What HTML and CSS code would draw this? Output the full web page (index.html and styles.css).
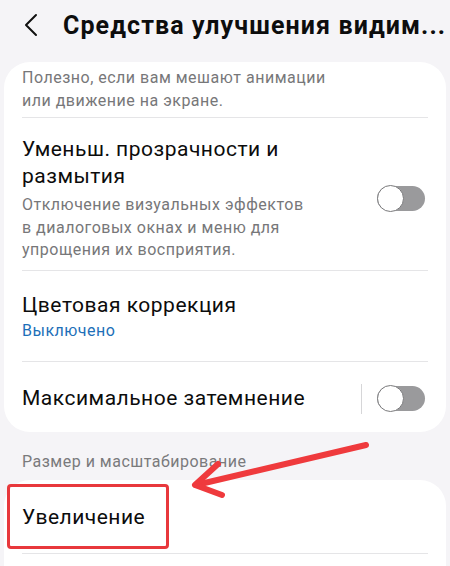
FILE: index.html
```html
<!DOCTYPE html>
<html lang="ru">
<head>
<meta charset="utf-8">
<link rel="stylesheet" href="styles.css">
</head>
<body>
<div class="screen">
  <header class="header">
    <svg class="back" width="16" height="24" viewBox="0 0 16 24"><path d="M13 2 L3 12 L13 22" fill="none" stroke="#111" stroke-width="2" stroke-linecap="round" stroke-linejoin="round"/></svg>
    <h1 class="title">Средства улучшения видим...</h1>
  </header>

  <section class="card card-top">
    <div class="item item-partial">
      <div class="sub">Полезно, если вам мешают анимации<br>или движение на экране.</div>
    </div>
    <div class="item item-switch">
      <div class="text">
        <div class="label">Уменьш. прозрачности и<br>размытия</div>
        <div class="sub">Отключение визуальных эффектов<br>в диалоговых окнах и меню для<br>упрощения их восприятия.</div>
      </div>
      <span class="toggle"><span class="knob"></span></span>
    </div>
    <div class="item item-color">
      <div class="text">
        <div class="label">Цветовая коррекция</div>
        <div class="status">Выключено</div>
      </div>
    </div>
    <div class="item item-last">
      <div class="text">
        <div class="label">Максимальное затемнение</div>
      </div>
      <span class="vsep"></span>
      <span class="toggle"><span class="knob"></span></span>
    </div>
  </section>

  <div class="section-title">Размер и масштабирование</div>

  <section class="card card-bottom">
    <div class="item item-zoom">
      <div class="label">Увеличение</div>
    </div>
  </section>

  <div class="highlight"></div>
  <svg class="arrow" width="450" height="566" viewBox="0 0 450 566">
    <g fill="none" stroke="#ef3a3d" stroke-width="6" stroke-linecap="round" stroke-linejoin="round">
      <path d="M366 445 L196 485"/>
      <path d="M218 464 L195 485 L222 495"/>
    </g>
  </svg>
</div>
</body>
</html>
```

FILE: styles.css
```css
* { box-sizing: border-box; }
html, body { margin: 0; padding: 0; }
body {
  background: #f5f4f7;
  font-family: Roboto, "Noto Sans", "Liberation Sans", sans-serif;
  color: #111;
}
.screen {
  position: relative;
  width: 450px;
  height: 566px;
  overflow: hidden;
}
.header {
  height: 50px;
  display: flex;
  align-items: center;
  padding-left: 23px;
  gap: 24px;
}
.back { flex: none; }
.title {
  margin: 0;
  font-size: 25px;
  font-weight: 700;
  letter-spacing: 1.1px;
  white-space: nowrap;
  color: #0d0d0d;
}
.card {
  background: #fff;
  border-radius: 26px;
  margin: 0 4px;
  overflow: hidden;
}
.card-top {
  margin-top: 12px;
}
.item {
  margin: 0 18px;
  border-bottom: 1px solid #e5e5e7;
  display: flex;
  align-items: center;
}
.text { flex: 1; }
.item-partial {
  padding: 4px 0 5px;
}
.item-partial .sub {
  line-height: 23px;
  margin-top: 0;
}
.item-switch { padding: 18px 0 8px; }
.item-color { padding: 21px 0 19px; }
.item-last { padding: 22px 0 18px; border-bottom: none; }
.label {
  font-size: 21px;
  line-height: 27px;
  letter-spacing: 0.5px;
  color: #0c0c0c;
}
.sub {
  font-size: 16px;
  line-height: 22.5px;
  letter-spacing: 0.5px;
  color: #777779;
  margin-top: 4px;
}
.status {
  font-size: 16px;
  line-height: 22px;
  letter-spacing: 0.5px;
  color: #1d6fb8;
  margin-top: 1px;
}
.toggle {
  position: relative;
  flex: none;
  width: 48px;
  height: 25px;
  border-radius: 13px;
  background: #9a9a9c;
  margin-right: 3px;
}
.knob {
  position: absolute;
  left: 0;
  top: -1px;
  width: 27px;
  height: 27px;
  border-radius: 50%;
  background: #fff;
  border: 1.5px solid #7a7a7c;
}
.vsep {
  flex: none;
  width: 1px;
  height: 30px;
  background: #d6d6d8;
  margin-right: 15px;
}
.section-title {
  font-size: 16px;
  line-height: 20px;
  letter-spacing: 0.5px;
  color: #7a7a7c;
  padding: 20px 22px 0;
  height: 48px;
}
.card-bottom {
  border-radius: 26px 26px 0 0;
  height: 200px;
}
.item-zoom {
  padding: 24px 0 22px;
}
.highlight {
  position: absolute;
  left: 7px;
  top: 484px;
  width: 162px;
  height: 65px;
  border: 3px solid #e8383c;
  border-radius: 4px;
}
.arrow {
  position: absolute;
  left: 0;
  top: 0;
}
```
